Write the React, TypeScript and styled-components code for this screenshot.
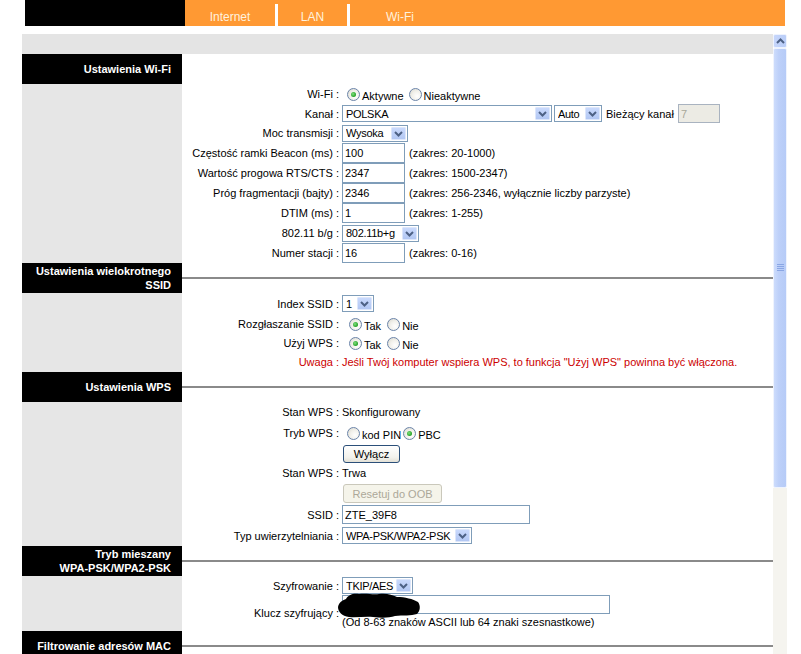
import styled, { createGlobalStyle } from 'styled-components';

const GlobalStyle = createGlobalStyle`
  html, body {
    margin: 0;
    padding: 0;
    background: #fff;
  }
  body {
    font-family: "Liberation Sans", Arial, sans-serif;
    font-size: 11px;
    color: #000;
  }
`;

const Page = styled.div`
  width: 801px;
  height: 654px;
  overflow: hidden;
  display: flex;
  flex-direction: column;
`;

const TopBar = styled.div`
  display: flex;
  height: 26px;
  padding-left: 25px;
`;

const Logo = styled.div`
  width: 160px;
  background: #000;
`;

const Nav = styled.nav`
  display: flex;
  width: 600px;
  background: #ff9933;
`;

const Tab = styled.div<{ $w: number }>`
  width: ${p => p.$w}px;
  box-sizing: border-box;
  padding-top: 10px;
  text-align: center;
  font-size: 12px;
  line-height: 14px;
  color: #fff2de;
`;

const TabDivider = styled.div`
  width: 3px;
  margin-top: 4px;
  background: #fff;
`;

const Frame = styled.div`
  display: flex;
  margin-top: 8px;
  flex: 1;
  min-height: 0;
`;

const Content = styled.div`
  margin-left: 22px;
  width: 751px;
  overflow: hidden;
`;

const GrayBar = styled.div`
  height: 20px;
  background: #e4e4e4;
`;

const SectionHead = styled.div`
  display: flex;
  height: 30px;
`;

const SectionTitle = styled.div`
  width: 160px;
  box-sizing: border-box;
  padding-right: 11px;
  background: #000;
  color: #fff;
  font-weight: bold;
  line-height: 14px;
  display: flex;
  align-items: center;
  justify-content: flex-end;
  text-align: right;
`;

const SectionRule = styled.div<{ $show: boolean }>`
  flex: 1;
  align-self: center;
  height: 2px;
  background: ${p => (p.$show ? '#8a8a8a' : 'transparent')};
`;

const SectionBody = styled.div`
  display: flex;
`;

const Side = styled.div`
  width: 160px;
  background: #e6e6e6;
`;

const Form = styled.div`
  flex: 1;
`;

const Row = styled.div<{ $h: number }>`
  display: flex;
  align-items: center;
  height: ${p => p.$h}px;
`;

const Label = styled.div<{ $red?: boolean }>`
  width: 157px;
  text-align: right;
  white-space: nowrap;
  color: ${p => (p.$red ? '#cc0000' : '#000')};
`;

const Field = styled.div<{ $column?: boolean }>`
  position: relative;
  display: flex;
  flex-direction: ${p => (p.$column ? 'column' : 'row')};
  align-items: ${p => (p.$column ? 'flex-start' : 'center')};
  padding-left: 3px;
  white-space: nowrap;
`;

const Text = styled.span<{ $red?: boolean; $gap?: number }>`
  margin-left: ${p => p.$gap ?? 0}px;
  color: ${p => (p.$red ? '#cc0000' : '#000')};
`;

const Hint = styled.span`
  margin-left: 4px;
`;

const KeyHint = styled.div`
  line-height: 17px;
`;

const RadioDot = styled.span<{ $checked?: boolean; $gap?: number }>`
  position: relative;
  display: inline-block;
  box-sizing: border-box;
  width: 13px;
  height: 13px;
  margin-left: ${p => p.$gap ?? 5}px;
  margin-right: 2px;
  border-radius: 50%;
  border: 1px solid #6b84a9;
  background: radial-gradient(circle at 65% 65%, #ffffff 0%, #f1f0ea 50%, #d6d5cc 100%);

  &::after {
    content: '';
    display: ${p => (p.$checked ? 'block' : 'none')};
    position: absolute;
    left: 3px;
    top: 3px;
    width: 5px;
    height: 5px;
    border-radius: 50%;
    background: radial-gradient(circle at 40% 40%, #7fe07f 0%, #25a025 70%);
  }
`;

const RadioText = styled.span`
  padding-top: 3px;
`;

const SelectBox = styled.span<{ $w: number; $gap?: number }>`
  display: inline-flex;
  align-items: center;
  box-sizing: border-box;
  width: ${p => p.$w}px;
  height: 17px;
  margin-left: ${p => p.$gap ?? 0}px;
  padding: 0 1px 0 3px;
  border: 1px solid #7f9db9;
  background: #fff;
`;

const SelectValue = styled.span`
  flex: 1;
  min-width: 0;
  overflow: hidden;
  letter-spacing: -0.3px;
`;

const SelectArrow = styled.span`
  flex: none;
  width: 15px;
  height: 13px;
  box-sizing: border-box;
  border: 1px solid #dce6fb;
  border-radius: 1px;
  background: linear-gradient(#c9d9fc, #b2c7f3);
  display: flex;
  align-items: center;
  justify-content: center;
`;

const TextInput = styled.input<{ $w: number; $h?: number; $gap?: number }>`
  box-sizing: border-box;
  width: ${p => p.$w}px;
  height: ${p => p.$h ?? 20}px;
  margin: 0 0 0 ${p => p.$gap ?? 0}px;
  padding: 0 2px;
  border: 1px solid #7f9db9;
  font: inherit;
  color: #000;
  background: #fff;

  &:disabled {
    background: #ecebe4;
    border-color: #a9b3c0;
    color: #a8a89a;
  }
`;

const Button = styled.button<{ $w: number; $h: number }>`
  box-sizing: border-box;
  width: ${p => p.$w}px;
  height: ${p => p.$h}px;
  margin-left: 1px;
  padding: 0;
  border: 1px solid #2b4f79;
  border-radius: 3px;
  background: linear-gradient(#ffffff, #f3f2ec 70%, #e2e0d6);
  font: inherit;
  color: #000;

  &:disabled {
    border-color: #cac8bb;
    background: #f5f4ea;
    color: #aca899;
  }
`;

const Scribble = styled.svg`
  position: absolute;
  left: -2px;
  top: -2px;
`;

const Scrollbar = styled.div`
  width: 14px;
  display: flex;
  flex-direction: column;
`;

const ScrollArrow = styled.div`
  height: 14px;
  box-sizing: border-box;
  border: 1px solid #eef3fe;
  border-radius: 2px;
  background: linear-gradient(90deg, #c6d6fb, #b9cdf8);
  display: flex;
  align-items: center;
  justify-content: center;
`;

const ScrollThumb = styled.div`
  height: 440px;
  box-sizing: border-box;
  border: 1px solid #eef3fe;
  border-radius: 2px;
  background: linear-gradient(90deg, #cddcfc, #bdd0f9 40%, #b6cbf7);
  display: flex;
  align-items: center;
  justify-content: center;
`;

const ScrollTrack = styled.div`
  flex: 1;
  background: #f5f4ef;
`;

const Chevron = () => (
  <svg width="9" height="7" viewBox="0 0 9 7">
    <path d="M1 2 L4.5 5.5 L8 2" fill="none" stroke="#4d6185" strokeWidth="2" />
  </svg>
);

function Select({ w, value, gap }: { w: number; value: string; gap?: number }) {
  return (
    <SelectBox $w={w} $gap={gap}>
      <SelectValue>{value}</SelectValue>
      <SelectArrow>
        <Chevron />
      </SelectArrow>
    </SelectBox>
  );
}

function Radio({ checked, label, gap }: { checked?: boolean; label: string; gap?: number }) {
  return (
    <>
      <RadioDot $checked={checked} $gap={gap} />
      <RadioText>{label}</RadioText>
    </>
  );
}

function Section({ title, rule, children }: { title: React.ReactNode; rule: boolean; children?: React.ReactNode }) {
  return (
    <>
      <SectionHead>
        <SectionTitle>
          <span>{title}</span>
        </SectionTitle>
        <SectionRule $show={rule} />
      </SectionHead>
      <SectionBody>
        <Side />
        <Form>{children}</Form>
      </SectionBody>
    </>
  );
}

function App() {
  return (
    <Page>
      <GlobalStyle />
      <TopBar>
        <Logo />
        <Nav>
          <Tab $w={90}>Internet</Tab>
          <TabDivider />
          <Tab $w={69}>LAN</Tab>
          <TabDivider />
          <Tab $w={100}>Wi-Fi</Tab>
        </Nav>
      </TopBar>
      <Frame>
        <Content>
          <GrayBar />

          <Section title="Ustawienia Wi-Fi" rule={false}>
            <Row $h={20}>
              <Label>Wi-Fi :</Label>
              <Field>
                <Radio checked label="Aktywne" />
                <Radio label="Nieaktywne" />
              </Field>
            </Row>
            <Row $h={19}>
              <Label>Kanał :</Label>
              <Field>
                <Select w={210} value="POLSKA" />
                <Select w={48} value="Auto" gap={2} />
                <Text $gap={4}>Bieżący kanał</Text>
                <TextInput $w={42} $h={19} $gap={4} value="7" disabled readOnly />
              </Field>
            </Row>
            <Row $h={20}>
              <Label>Moc transmisji :</Label>
              <Field>
                <Select w={66} value="Wysoka" />
              </Field>
            </Row>
            <Row $h={20}>
              <Label>Częstość ramki Beacon (ms) :</Label>
              <Field>
                <TextInput $w={63} value="100" readOnly />
                <Hint>(zakres: 20-1000)</Hint>
              </Field>
            </Row>
            <Row $h={20}>
              <Label>Wartość progowa RTS/CTS :</Label>
              <Field>
                <TextInput $w={63} value="2347" readOnly />
                <Hint>(zakres: 1500-2347)</Hint>
              </Field>
            </Row>
            <Row $h={20}>
              <Label>Próg fragmentacji (bajty) :</Label>
              <Field>
                <TextInput $w={63} value="2346" readOnly />
                <Hint>(zakres: 256-2346, wyłącznie liczby parzyste)</Hint>
              </Field>
            </Row>
            <Row $h={20}>
              <Label>DTIM (ms) :</Label>
              <Field>
                <TextInput $w={63} value="1" readOnly />
                <Hint>(zakres: 1-255)</Hint>
              </Field>
            </Row>
            <Row $h={20}>
              <Label>802.11 b/g :</Label>
              <Field>
                <Select w={77} value="802.11b+g" />
              </Field>
            </Row>
            <Row $h={20}>
              <Label>Numer stacji :</Label>
              <Field>
                <TextInput $w={63} value="16" readOnly />
                <Hint>(zakres: 0-16)</Hint>
              </Field>
            </Row>
          </Section>

          <Section title={<>Ustawienia wielokrotnego<br />SSID</>} rule>
            <Row $h={21}>
              <Label>Index SSID :</Label>
              <Field>
                <Select w={32} value="1" />
              </Field>
            </Row>
            <Row $h={20}>
              <Label>Rozgłaszanie SSID :</Label>
              <Field>
                <Radio checked label="Tak" gap={7} />
                <Radio label="Nie" gap={6} />
              </Field>
            </Row>
            <Row $h={18}>
              <Label>Użyj WPS :</Label>
              <Field>
                <Radio checked label="Tak" gap={7} />
                <Radio label="Nie" gap={6} />
              </Field>
            </Row>
            <Row $h={20}>
              <Label $red>Uwaga :</Label>
              <Field>
                <Text $red>Jeśli Twój komputer wspiera WPS, to funkcja "Użyj WPS" powinna być włączona.</Text>
              </Field>
            </Row>
          </Section>

          <Section title="Ustawienia WPS" rule>
            <Row $h={20}>
              <Label>Stan WPS :</Label>
              <Field>
                <Text>Skonfigurowany</Text>
              </Field>
            </Row>
            <Row $h={22}>
              <Label>Tryb WPS :</Label>
              <Field>
                <Radio label="kod PIN" gap={5} />
                <Radio checked label="PBC" gap={2} />
              </Field>
            </Row>
            <Row $h={19}>
              <Label />
              <Field>
                <Button $w={57} $h={18}>Wyłącz</Button>
              </Field>
            </Row>
            <Row $h={20}>
              <Label>Stan WPS :</Label>
              <Field>
                <Text>Trwa</Text>
              </Field>
            </Row>
            <Row $h={21}>
              <Label />
              <Field>
                <Button $w={99} $h={19} disabled>Resetuj do OOB</Button>
              </Field>
            </Row>
            <Row $h={21}>
              <Label>SSID :</Label>
              <Field>
                <TextInput $w={188} $h={19} value="ZTE_39F8" readOnly />
              </Field>
            </Row>
            <Row $h={21}>
              <Label>Typ uwierzytelniania :</Label>
              <Field>
                <Select w={130} value="WPA-PSK/WPA2-PSK" />
              </Field>
            </Row>
          </Section>

          <Section title={<>Tryb mieszany<br />WPA-PSK/WPA2-PSK</>} rule>
            <Row $h={19}>
              <Label>Szyfrowanie :</Label>
              <Field>
                <Select w={71} value="TKIP/AES" />
              </Field>
            </Row>
            <Row $h={36}>
              <Label>Klucz szyfrujący :</Label>
              <Field $column>
                <TextInput $w={268} $h={19} value="" readOnly />
                <KeyHint>(Od 8-63 znaków ASCII lub 64 znaki szesnastkowe)</KeyHint>
                <Scribble width="84" height="25" viewBox="0 0 84 25">
                  <path
                    d="M1 14 C2 9 6 7 9 6 C11 2 16 0 22 1 C30 0 36 2 42 1 C50 0 55 2 60 4 C68 4 76 6 81 9 C84 13 83 18 80 21 C74 23 66 22 58 23 C52 25 44 25 36 24 C28 23 20 25 12 24 C5 23 1 19 1 14 Z"
                    fill="#000"
                  />
                </Scribble>
              </Field>
            </Row>
          </Section>

          <Section title="Filtrowanie adresów MAC" rule />
        </Content>
        <Scrollbar>
          <ScrollArrow>
            <svg width="9" height="7" viewBox="0 0 9 7">
              <path d="M1 5 L4.5 1.5 L8 5" fill="none" stroke="#4d6185" strokeWidth="2" />
            </svg>
          </ScrollArrow>
          <ScrollThumb>
            <svg width="7" height="8" viewBox="0 0 7 8">
              <path d="M0 0.5 H7 M0 2.5 H7 M0 4.5 H7 M0 6.5 H7" stroke="#8aa6e4" strokeWidth="1" />
            </svg>
          </ScrollThumb>
          <ScrollTrack />
        </Scrollbar>
      </Frame>
    </Page>
  );
}

export default App;
